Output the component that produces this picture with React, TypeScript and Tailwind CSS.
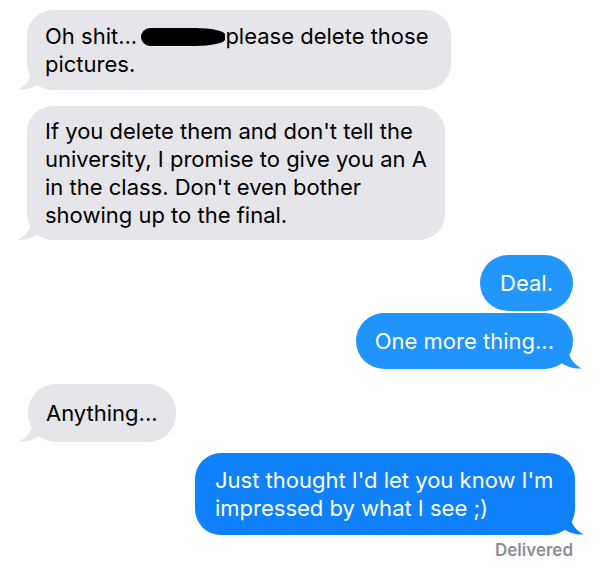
import React from "react";

const font = { fontFamily: "Inter, 'Noto Sans', sans-serif" };

function TailLeft({ color }: { color: string }) {
  return (
    <svg
      className="absolute -left-[9px] bottom-0"
      width="24"
      height="22"
      viewBox="0 0 24 22"
    >
      <path d="M14 0 C14 10 8 18 0 21.5 C8 22 16 20 23 14 L23 0 Z" fill={color} />
    </svg>
  );
}

function TailRight({ color }: { color: string }) {
  return (
    <svg
      className="absolute -right-[9px] bottom-0"
      width="24"
      height="22"
      viewBox="0 0 24 22"
    >
      <path d="M10 0 C10 10 16 18 24 21.5 C16 22 8 20 1 14 L1 0 Z" fill={color} />
    </svg>
  );
}

export default function App() {
  return (
    <div className="w-[600px] h-[571px] bg-white overflow-hidden text-[22px] leading-[28px]" style={font}>
      <div className="flex flex-col pt-[10px]">
        {/* Received */}
        <div className="relative ml-[27px] w-[424px] rounded-[26px] bg-[#e5e5ea] px-[18px] py-[12px] text-black">
          <span className="block">
            Oh shit...{" "}
            <span className="inline-block align-middle w-[84px] h-[18px] -ml-[2px] -mt-[3px] bg-black rounded-[10px_40%_40%_10px]" />
            please delete those
          </span>
          <span className="block">pictures.</span>
          <TailLeft color="#e5e5ea" />
        </div>

        <div className="relative ml-[27px] mt-[16px] w-[418px] rounded-[26px] bg-[#e5e5ea] px-[18px] py-[11px] text-black">
          <span className="block">If you delete them and don't tell the</span>
          <span className="block">university, I promise to give you an A</span>
          <span className="block">in the class. Don't even bother</span>
          <span className="block">showing up to the final.</span>
          <TailLeft color="#e5e5ea" />
        </div>

        {/* Sent */}
        <div className="flex flex-col items-end mr-[27px] mt-[15px] gap-[2px]">
          <div className="rounded-[28px] bg-[#2196fd] px-[20px] py-[14px] text-white">Deal.</div>
          <div className="relative rounded-[28px] bg-[#2094fd] px-[19px] py-[14px] text-white">
            One more thing...
            <TailRight color="#2094fd" />
          </div>
        </div>

        <div className="relative ml-[28px] mt-[15px] w-fit rounded-[28px] bg-[#e5e5ea] px-[18px] py-[15px] text-black">
          Anything...
          <TailLeft color="#e5e5ea" />
        </div>

        <div className="flex flex-col items-end mr-[25px] mt-[11px]">
          <div className="relative w-[380px] rounded-[26px] bg-[#0f82fb] px-[20px] py-[13px] text-white">
            <span className="block">Just thought I'd let you know I'm</span>
            <span className="block">impressed by what I see ;)</span>
            <TailRight color="#0f82fb" />
          </div>
          <div className="mt-[4px] mr-[2px] text-[17px] leading-[22px] font-semibold text-[#8e8e93]">
            Delivered
          </div>
        </div>
      </div>
    </div>
  );
}
